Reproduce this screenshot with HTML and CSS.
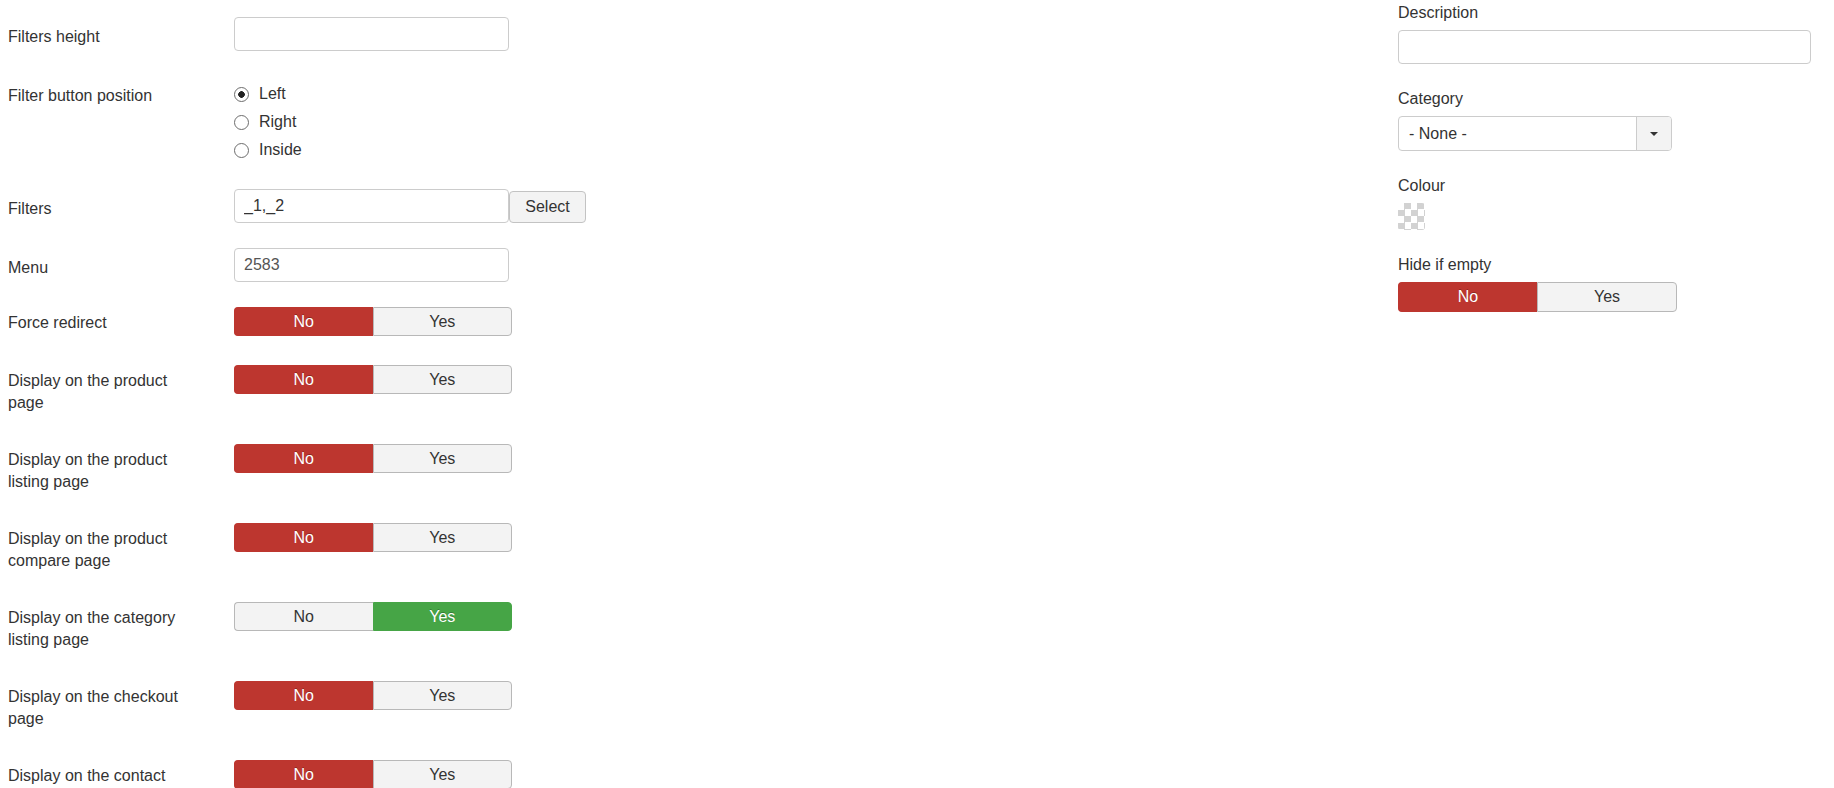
FILE: index.html
```html
<!DOCTYPE html>
<html>
<head>
    <title>Filter module - Options</title>
    <link rel="stylesheet" href="styles.css">
</head>
<body>
    <div class="page">
        <div class="form-main">
            <div class="control-group">
                <label class="control-label field-label">Filters height</label>
                <div class="controls"><input type="text" class="text-field" value=""></div>
            </div>

            <div class="control-group">
                <label class="control-label field-label">Filter button position</label>
                <div class="controls radio-list">
                    <label class="radio"><input type="radio" name="btnpos" checked> Left</label>
                    <label class="radio"><input type="radio" name="btnpos"> Right</label>
                    <label class="radio"><input type="radio" name="btnpos"> Inside</label>
                </div>
            </div>

            <div class="control-group">
                <label class="control-label field-label">Filters</label>
                <div class="controls input-append">
                    <input type="text" class="text-field" value="_1,_2">
                    <button class="btn">Select</button>
                </div>
            </div>

            <div class="control-group">
                <label class="control-label field-label">Menu</label>
                <div class="controls"><input type="text" class="text-field muted" value="2583"></div>
            </div>

            <div class="control-group">
                <label class="control-label">Force redirect</label>
                <div class="controls">
                    <div class="switch"><span class="active-no">No</span><span>Yes</span></div>
                </div>
            </div>

            <div class="control-group">
                <label class="control-label">Display on the product<br>page</label>
                <div class="controls">
                    <div class="switch"><span class="active-no">No</span><span>Yes</span></div>
                </div>
            </div>

            <div class="control-group">
                <label class="control-label">Display on the product<br>listing page</label>
                <div class="controls">
                    <div class="switch"><span class="active-no">No</span><span>Yes</span></div>
                </div>
            </div>

            <div class="control-group">
                <label class="control-label">Display on the product<br>compare page</label>
                <div class="controls">
                    <div class="switch"><span class="active-no">No</span><span>Yes</span></div>
                </div>
            </div>

            <div class="control-group">
                <label class="control-label">Display on the category<br>listing page</label>
                <div class="controls">
                    <div class="switch"><span>No</span><span class="active-yes">Yes</span></div>
                </div>
            </div>

            <div class="control-group">
                <label class="control-label">Display on the checkout<br>page</label>
                <div class="controls">
                    <div class="switch"><span class="active-no">No</span><span>Yes</span></div>
                </div>
            </div>

            <div class="control-group">
                <label class="control-label">Display on the contact</label>
                <div class="controls">
                    <div class="switch"><span class="active-no">No</span><span>Yes</span></div>
                </div>
            </div>
        </div>

        <div class="form-side">
            <div class="side-group">
                <label class="side-label">Description</label>
                <input type="text" class="text-field wide" value="">
            </div>

            <div class="side-group">
                <label class="side-label">Category</label>
                <div class="select-box">
                    <span class="select-value">- None -</span>
                    <span class="select-arrow"><span class="caret"></span></span>
                </div>
            </div>

            <div class="side-group">
                <label class="side-label">Colour</label>
                <div class="swatch"></div>
            </div>

            <div class="side-group">
                <label class="side-label">Hide if empty</label>
                <div class="switch switch-side"><span class="active-no">No</span><span>Yes</span></div>
            </div>
        </div>
    </div>
</body>
</html>
```

FILE: styles.css
```css
html {
    overflow: hidden;
}

body {
    font-family: "Liberation Sans", Arial, sans-serif;
    font-size: 16px;
    color: #333;
    margin: 0;
    padding: 0 8px;
    background-color: #fff;
}

.page {
    display: flex;
    justify-content: space-between;
}

/* left column: label + control rows */
.form-main {
    padding-top: 17px;
}

.control-group {
    display: flex;
    align-items: flex-start;
    min-height: 33px;
    margin-bottom: 25px;
}

.control-label {
    width: 226px;
    padding: 5px 0;
    line-height: 22px;
}

    .control-label.field-label {
        padding-top: 9px;
        padding-bottom: 1px;
    }

.controls {
    display: flex;
}

.text-field {
    box-sizing: border-box;
    width: 275px;
    height: 34px;
    padding: 0 9px;
    border: 1px solid #ccc;
    border-radius: 4px;
    font-family: inherit;
    font-size: 16px;
    color: #333;
    background-color: #fff;
}

    .text-field.muted {
        color: #555;
    }

    .text-field.wide {
        width: 413px;
    }

.btn {
    box-sizing: border-box;
    width: 77px;
    height: 32px;
    margin-top: 2px;
    border: 1px solid #c3c3c3;
    border-radius: 4px;
    background-color: #f3f3f3;
    font-family: inherit;
    font-size: 16px;
    color: #333;
}

/* radio buttons */
.radio-list {
    flex-direction: column;
    gap: 6px;
    padding: 7px 0 3px;
}

.radio {
    display: flex;
    align-items: center;
    line-height: 22px;
}

    .radio input {
        appearance: none;
        box-sizing: border-box;
        width: 15px;
        height: 15px;
        margin: 0 10px 0 0;
        border: 1px solid #6d6d6d;
        border-radius: 50%;
        background-color: #fff;
    }

        .radio input:checked {
            background: radial-gradient(circle, #222 3px, #fff 3.6px);
        }

/* yes / no toggle */
.switch {
    display: flex;
    width: 278px;
    height: 29px;
}

    .switch span {
        flex: 1;
        text-align: center;
        line-height: 27px;
        border: 1px solid #b8b8b8;
        background-color: #f3f3f3;
        color: #333;
    }

        .switch span:first-child {
            border-radius: 4px 0 0 4px;
            border-right: none;
        }

        .switch span:last-child {
            border-radius: 0 4px 4px 0;
        }

        .switch span.active-no {
            background-color: #bd362f;
            border-color: #bd362f;
            color: #fff;
            text-shadow: 0 -1px 0 rgba(0, 0, 0, 0.25);
        }

        .switch span.active-yes {
            background-color: #46a546;
            border-color: #46a546;
            color: #fff;
            text-shadow: 0 -1px 0 rgba(0, 0, 0, 0.25);
        }

.switch-side {
    width: 279px;
    height: 30px;
}

    .switch-side span {
        line-height: 28px;
    }

/* right column: stacked labels */
.form-side {
    width: 413px;
    margin-right: 15px;
    padding-top: 2px;
}

.side-group {
    margin-bottom: 24px;
}

.side-label {
    display: block;
    line-height: 22px;
    margin-bottom: 6px;
}

.select-box {
    box-sizing: border-box;
    display: flex;
    width: 274px;
    height: 35px;
    border: 1px solid #ccc;
    border-radius: 4px;
    overflow: hidden;
}

.select-value {
    flex: 1;
    padding-left: 10px;
    line-height: 33px;
}

.select-arrow {
    display: flex;
    align-items: center;
    justify-content: center;
    width: 34px;
    border-left: 1px solid #ccc;
    background-color: #f3f3f3;
}

.caret {
    width: 0;
    height: 0;
    border-top: 4px solid #333;
    border-left: 4px solid transparent;
    border-right: 4px solid transparent;
}

.swatch {
    width: 27px;
    height: 27px;
    margin-top: 1px;
    margin-bottom: 1px;
    border-radius: 3px;
    background-color: #fff;
    background-image: conic-gradient(#d2d2d2 25%, #fff 0 50%, #d2d2d2 0 75%, #fff 0);
    background-size: 13px 13px;
}
```
